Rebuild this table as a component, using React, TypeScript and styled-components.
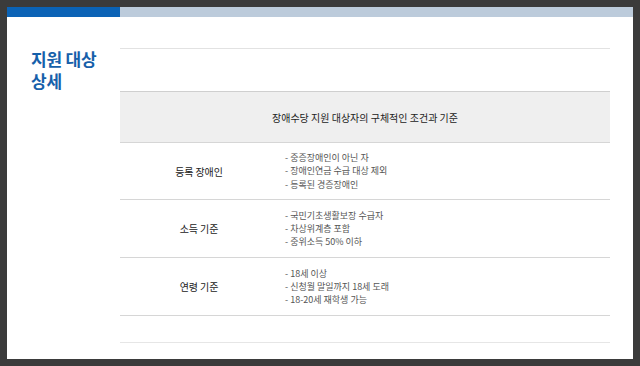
import React from 'react';
import styled, { createGlobalStyle } from 'styled-components';

const GlobalStyle = createGlobalStyle`
  html, body {
    margin: 0;
    padding: 0;
    background: #3b3b3b;
  }
  body {
    font-family: "Noto Sans CJK KR", "Noto Sans", sans-serif;
  }
`;

// Dark viewer frame
const Page = styled.div`
  width: 640px;
  height: 366px;
  box-sizing: border-box;
  padding: 7px;
  background: #3b3b3b;
`;

// White slide
const Slide = styled.div`
  width: 626px;
  height: 352px;
  background: #fff;
  display: flex;
  flex-direction: column;
`;

const TopBar = styled.div`
  display: flex;
  height: 10px;
  flex-shrink: 0;
`;

const BarSegment = styled.div<{ $accent?: boolean }>`
  flex: ${(p) => (p.$accent ? '0 0 113px' : '1')};
  background: ${(p) => (p.$accent ? '#0b63b6' : '#bccbdb')};
`;

const Body = styled.div`
  display: grid;
  grid-template-columns: 113px 490px;
  padding-top: 31px;
`;

const Title = styled.h2`
  margin: 0;
  padding-left: 24px;
  font-size: 17px;
  line-height: 22px;
  font-weight: 700;
  letter-spacing: -0.2px;
  color: #1660aa;
`;

const TableArea = styled.div`
  border-top: 1px solid #e2e2e2;
  padding-top: 42px;
`;

const HeaderRow = styled.div`
  height: 52px;
  box-sizing: border-box;
  border-top: 1px solid #cfcfcf;
  border-bottom: 1px solid #d6d6d6;
  background: #efefef;
  display: flex;
  align-items: center;
  justify-content: center;
  font-size: 10px;
  color: #222;
`;

const Row = styled.div<{ $height: number }>`
  display: grid;
  grid-template-columns: 158px 1fr;
  height: ${(p) => p.$height}px;
  box-sizing: border-box;
  border-bottom: 1px solid #d6d6d6;
  align-items: center;
`;

const Label = styled.div`
  text-align: center;
  font-size: 10px;
  letter-spacing: -0.1px;
  color: #222;
`;

const Items = styled.ul`
  list-style: none;
  margin: 0;
  padding: 0 0 0 7px;
`;

const Item = styled.li`
  font-size: 9px;
  line-height: 13.3px;
  color: #555;
`;

const Spacer = styled.div`
  height: 26px;
  border-bottom: 1px solid #e6e6e6;
`;

const rows = [
  {
    label: '등록 장애인',
    height: 57,
    items: ['중증장애인이 아닌 자', '장애인연금 수급 대상 제외', '등록된 경증장애인'],
  },
  {
    label: '소득 기준',
    height: 58,
    items: ['국민기초생활보장 수급자', '차상위계층 포함', '중위소득 50% 이하'],
  },
  {
    label: '연령 기준',
    height: 58,
    items: ['18세 이상', '신청월 말일까지 18세 도래', '18-20세 재학생 가능'],
  },
];

const App = (): JSX.Element => (
  <>
    <GlobalStyle />
    <Page>
      <Slide>
        <TopBar>
          <BarSegment $accent />
          <BarSegment />
        </TopBar>
        <Body>
          <Title>
            지원 대상
            <br />
            상세
          </Title>
          <TableArea>
            <HeaderRow>장애수당 지원 대상자의 구체적인 조건과 기준</HeaderRow>
            {rows.map((row) => (
              <Row key={row.label} $height={row.height}>
                <Label>{row.label}</Label>
                <Items>
                  {row.items.map((item) => (
                    <Item key={item}>- {item}</Item>
                  ))}
                </Items>
              </Row>
            ))}
            <Spacer />
          </TableArea>
        </Body>
      </Slide>
    </Page>
  </>
);

export default App;
